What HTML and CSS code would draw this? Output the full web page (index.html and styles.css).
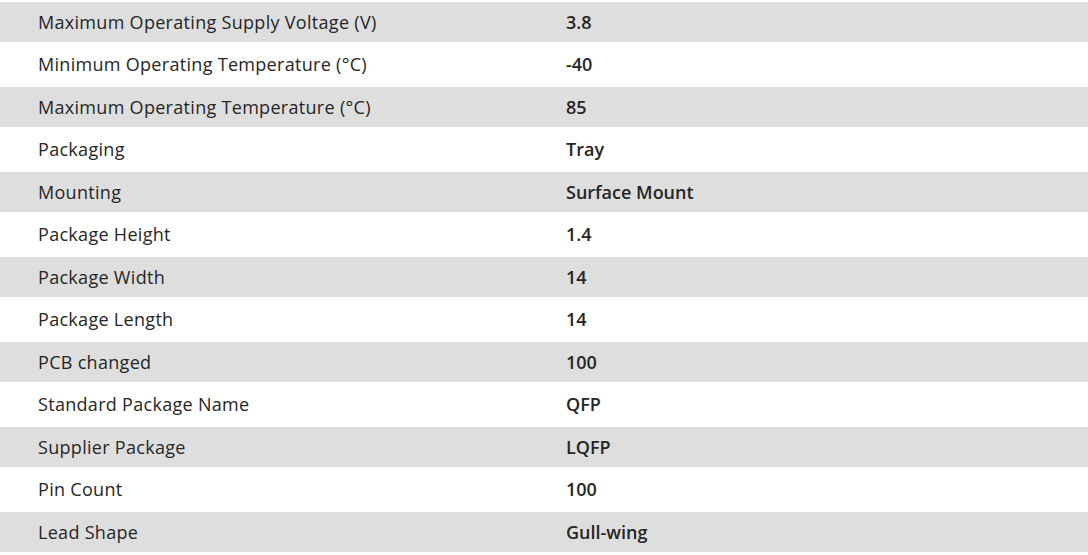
FILE: index.html
```html
<!DOCTYPE html>
<html lang="en">
<head>
<meta charset="utf-8">
<title>Specifications</title>
<link rel="stylesheet" href="styles.css">
</head>
<body>
<div class="spec-table">
  <div class="row shaded"><div class="label">Maximum Operating Supply Voltage (V)</div><div class="value">3.8</div></div>
  <div class="row"><div class="label">Minimum Operating Temperature (°C)</div><div class="value">-40</div></div>
  <div class="row shaded"><div class="label">Maximum Operating Temperature (°C)</div><div class="value">85</div></div>
  <div class="row"><div class="label">Packaging</div><div class="value">Tray</div></div>
  <div class="row shaded"><div class="label">Mounting</div><div class="value">Surface Mount</div></div>
  <div class="row"><div class="label">Package Height</div><div class="value">1.4</div></div>
  <div class="row shaded"><div class="label">Package Width</div><div class="value">14</div></div>
  <div class="row"><div class="label">Package Length</div><div class="value">14</div></div>
  <div class="row shaded"><div class="label">PCB changed</div><div class="value">100</div></div>
  <div class="row"><div class="label">Standard Package Name</div><div class="value">QFP</div></div>
  <div class="row shaded"><div class="label">Supplier Package</div><div class="value">LQFP</div></div>
  <div class="row"><div class="label">Pin Count</div><div class="value">100</div></div>
  <div class="row shaded"><div class="label">Lead Shape</div><div class="value">Gull-wing</div></div>
</div>
</body>
</html>
```
FILE: styles.css
```css
html, body {
  margin: 0;
  padding: 0;
  background: #ffffff;
}
body {
  font-family: "Open Sans", "Noto Sans", sans-serif;
  color: #262626;
  overflow: hidden;
}
.spec-table {
  display: flex;
  flex-direction: column;
  gap: 3px;
  padding-top: 2px;
  width: 1088px;
}
.row {
  display: grid;
  grid-template-columns: 528px 1fr;
  align-items: center;
  height: 39.5px;
  padding-left: 38px;
  font-size: 18px;
}
.row.shaded {
  background: #dedede;
}
.label {
  font-weight: 400;
  letter-spacing: 0.3px;
}
.value {
  font-weight: 600;
}
```
